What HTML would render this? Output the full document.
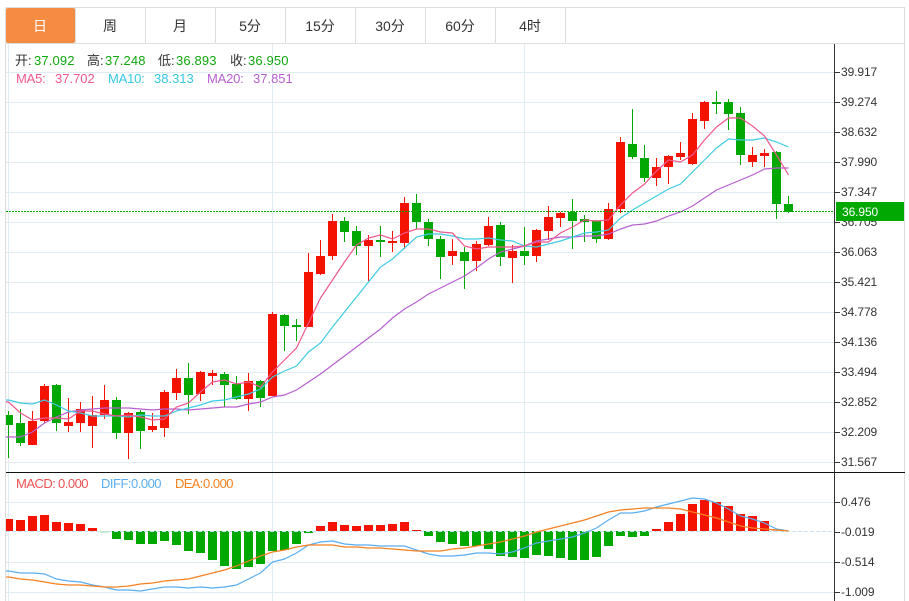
<!DOCTYPE html>
<html><head><meta charset="utf-8"><style>
html,body{margin:0;padding:0;background:#fff;width:909px;height:601px;overflow:hidden}
svg{display:block;font-family:"Liberation Sans","Noto Sans CJK SC",sans-serif}
</style></head><body>
<svg width="909" height="601" viewBox="0 0 909 601" xmlns="http://www.w3.org/2000/svg">
<defs><clipPath id="c"><rect x="6" y="44" width="828" height="557"/></clipPath></defs>
<rect width="909" height="601" fill="#fff"/>
<!-- tabs -->
<path d="M5.5 7.5H904.5V601M5.5 7.5V601M5 43.5H905M75.5 8V43M145.5 8V43M215.5 8V43M285.5 8V43M355.5 8V43M425.5 8V43M495.5 8V43M565.5 8V43" fill="none" stroke="#dedede" stroke-width="1"/>
<rect x="6" y="8" width="69" height="35" rx="2" fill="#f48c43"/>
<g font-size="14" fill="#333" text-anchor="middle">
<text x="40" y="31" fill="#fff">日</text><text x="110" y="31">周</text><text x="180" y="31">月</text><text x="250" y="31">5分</text><text x="320" y="31">15分</text><text x="390" y="31">30分</text><text x="460" y="31">60分</text><text x="530" y="31">4时</text>
</g>
<!-- grid -->
<path d="M6 72.5H834M6 102.5H834M6 132.5H834M6 162.5H834M6 192.5H834M6 222.5H834M6 252.5H834M6 282.5H834M6 312.5H834M6 342.5H834M6 372.5H834M6 402.5H834M6 432.5H834M6 462.5H834M6 502.5H834M6 562.5H834M6 592.5H834M8.5 44V472M272.5 44V472M524.5 44V472M8.5 473V601M272.5 473V601M524.5 473V601" fill="none" stroke="#e1ebf2" stroke-width="1"/>
<g clip-path="url(#c)" fill="none">
<!-- candles -->
<path stroke="#f31300" stroke-width="1" d="M32.5 411V445M44.5 384V423M68.5 398V432M80.5 402V432M92.5 396V448M104.5 385V419M128.5 412V459M152.5 413V432M164.5 390V437M176.5 369V400M200.5 371V401M212.5 370V385M248.5 373V411M272.5 312V396M308.5 253V327M320.5 240V275M332.5 214V260M368.5 235V281M392.5 231V252M404.5 197V249M452.5 239V265M476.5 241V271M488.5 217V246M512.5 245V283M536.5 229V262M548.5 206V240M560.5 212V227M608.5 203V240M620.5 137V213M656.5 158V186M668.5 155V184M680.5 142V160M692.5 113V165M704.5 101V129M752.5 147V167M764.5 149V167"/>
<path stroke="#f31300" stroke-width="9" d="M32.5 421V445M44.5 386V421M68.5 422V426M80.5 409V423M92.5 415V426M104.5 400V415M128.5 413V433M152.5 426V430M164.5 392V428M176.5 378V393M200.5 372V394M212.5 373V376M248.5 381V399M272.5 314V396M308.5 272V327M320.5 256V274M332.5 221V256M368.5 240V246M392.5 241V243M404.5 203V243M452.5 251V256M476.5 244V261M488.5 226V245M512.5 251V258M536.5 230V256M548.5 217V231M560.5 213V218M608.5 209V239M620.5 142V209M656.5 167V178M668.5 156V167M680.5 153V157M692.5 119V164M704.5 102V121M752.5 155V162M764.5 153V156"/>
<path stroke="#02a802" stroke-width="1" d="M8.5 411V458M20.5 409V446M56.5 384V431M116.5 397V439M140.5 410V449M188.5 363V414M224.5 372V407M236.5 376V400M260.5 380V407M284.5 314V351M296.5 319V341M344.5 217V242M356.5 226V255M380.5 226V257M416.5 194V229M428.5 219V246M440.5 236V279M464.5 247V289M500.5 222V266M524.5 227V265M572.5 199V249M584.5 215V242M596.5 220V243M632.5 109V159M644.5 145V182M716.5 91V114M728.5 99V130M740.5 107V165M776.5 151V219M788.5 196V213"/>
<path stroke="#02a802" stroke-width="9" d="M8.5 415V425M20.5 423V443M56.5 385V423M116.5 400V433M140.5 412V431M188.5 378V395M224.5 374V385M236.5 384V399M260.5 381V398M284.5 315V326M296.5 325V327M344.5 221V232M356.5 231V246M380.5 240V242M416.5 203V222M428.5 222V239M440.5 239V257M464.5 252V261M500.5 225V257M524.5 251V256M572.5 212V221M584.5 219V222M596.5 221V239M632.5 144V157M644.5 158V178M716.5 102V104M728.5 102V114M740.5 113V155M776.5 152V204M788.5 204V212"/>
<!-- MA lines -->
<polyline stroke="#b75fd0" stroke-width="1.2" points="6,437 8.5,437 20.5,437 32.5,432 44.5,423 56.5,417 68.5,412 80.5,410 92.5,409 104.5,408 116.5,408 128.5,408 140.5,409 152.5,410 164.5,409 176.5,409 188.5,410 200.5,409 212.5,408 224.5,407 236.5,407 248.5,404 260.5,402 272.5,397 284.5,395 296.5,390 308.5,382 320.5,374 332.5,365 344.5,356 356.5,347 368.5,338 380.5,329 392.5,318 404.5,309 416.5,302 428.5,294 440.5,288 452.5,282 464.5,276 476.5,268 488.5,259 500.5,252 512.5,249 524.5,246 536.5,241 548.5,239 560.5,237 572.5,237 584.5,236 596.5,236 608.5,234 620.5,229 632.5,225 644.5,224 656.5,221 668.5,216 680.5,212 692.5,206 704.5,198 716.5,190 728.5,185 740.5,180 752.5,175 764.5,169 776.5,168 788.5,168"/>
<polyline stroke="#40cbe3" stroke-width="1.2" points="6,400 8.5,400 20.5,403 32.5,404 44.5,400 56.5,405 68.5,411 80.5,413 92.5,416 104.5,416 116.5,416 128.5,417 140.5,415 152.5,416 164.5,416 176.5,411 188.5,408 200.5,405 212.5,401 224.5,400 236.5,397 248.5,394 260.5,389 272.5,377 284.5,371 296.5,366 308.5,352 320.5,343 332.5,327 344.5,312 356.5,297 368.5,282 380.5,267 392.5,259 404.5,248 416.5,237 428.5,234 440.5,234 452.5,236 464.5,239 476.5,239 488.5,238 500.5,240 512.5,241 524.5,246 536.5,247 548.5,244 560.5,241 572.5,237 584.5,233 596.5,232 608.5,230 620.5,218 632.5,210 644.5,203 656.5,196 668.5,189 680.5,184 692.5,172 704.5,160 716.5,148 728.5,139 740.5,140 752.5,140 764.5,138 776.5,142 788.5,147"/>
<polyline stroke="#f0568f" stroke-width="1.2" points="6,402 8.5,402 20.5,413 32.5,420 44.5,418 56.5,418 68.5,419 80.5,411 92.5,411 104.5,414 116.5,416 128.5,415 140.5,417 152.5,420 164.5,419 176.5,407 188.5,403 200.5,392 212.5,382 224.5,380 236.5,384 248.5,382 260.5,387 272.5,372 284.5,360 296.5,348 308.5,323 320.5,298 332.5,280 344.5,262 356.5,245 368.5,238 380.5,235 392.5,239 404.5,233 416.5,229 428.5,229 440.5,232 452.5,233 464.5,246 476.5,249 488.5,247 500.5,247 512.5,247 524.5,246 536.5,242 548.5,242 560.5,233 572.5,227 584.5,220 596.5,221 608.5,220 620.5,205 632.5,193 644.5,184 656.5,171 668.5,160 680.5,162 692.5,155 704.5,140 716.5,127 728.5,118 740.5,118 752.5,126 764.5,136 776.5,155 788.5,175"/>
<!-- close dotted -->
<path stroke="#00a800" stroke-width="1" stroke-dasharray="2 1" d="M6 211.5H834"/>
<!-- MACD bars -->
<path stroke="#f31300" stroke-width="9" d="M8.5 519V531M20.5 520V531M32.5 516V531M44.5 515V531M56.5 522V531M68.5 523V531M80.5 524V531M92.5 528V531M320.5 526V531M332.5 522V531M344.5 525V531M356.5 526V531M368.5 525V531M380.5 525V531M392.5 524V531M404.5 522V531M416.5 530V531M656.5 529V531M668.5 522V531M680.5 514V531M692.5 504V531M704.5 500V531M716.5 502V531M728.5 506V531M740.5 514V531M752.5 516V531M764.5 521V531"/>
<path stroke="#f9b0a8" stroke-width="9" d="M776.5 529.5V531"/>
<path stroke="#02a802" stroke-width="9" d="M116.5 531V539M128.5 531V540M140.5 531V544M152.5 531V544M164.5 531V541M176.5 531V545M188.5 531V551M200.5 531V553M212.5 531V560M224.5 531V566M236.5 531V569M248.5 531V567M260.5 531V564M272.5 531V551M284.5 531V550M296.5 531V544M308.5 531V533M428.5 531V536M440.5 531V542M452.5 531V544M464.5 531V546M476.5 531V546M488.5 531V549M500.5 531V556M512.5 531V557M524.5 531V558M536.5 531V555M548.5 531V556M560.5 531V558M572.5 531V560M584.5 531V560M596.5 531V557M608.5 531V546M620.5 531V536M632.5 531V537M644.5 531V536"/>
<path stroke="#8fd88f" stroke-width="9" d="M104.5 531.5V532.5"/>
<!-- MACD zero -->
<path stroke="#c4e3f2" stroke-width="1" stroke-dasharray="4 2" d="M6 531.5H834"/>
<polyline stroke="#5aaef0" stroke-width="1.2" points="6,571 8.5,571 20.5,573 32.5,573 44.5,574 56.5,579 68.5,581 80.5,582 92.5,585 104.5,587 116.5,590 128.5,590 140.5,591 152.5,589 164.5,587 176.5,587 188.5,588 200.5,587 212.5,588 224.5,587 236.5,585 248.5,579 260.5,573 272.5,562 284.5,559 296.5,553 308.5,545 320.5,542 332.5,541 344.5,544 356.5,545 368.5,545 380.5,546 392.5,546 404.5,546 416.5,550 428.5,554 440.5,556 452.5,556 464.5,555 476.5,553 488.5,553 500.5,554 512.5,552 524.5,548 536.5,543 548.5,541 560.5,539 572.5,537 584.5,533 596.5,528 608.5,520 620.5,513 632.5,513 644.5,511 656.5,507 668.5,504 680.5,501 692.5,498 704.5,499 716.5,503 728.5,509 740.5,516 752.5,519 764.5,523 776.5,529 788.5,531"/>
<polyline stroke="#f58020" stroke-width="1.2" points="6,577 8.5,577 20.5,579 32.5,580 44.5,582 56.5,584 68.5,585 80.5,585 92.5,586 104.5,587 116.5,587 128.5,586 140.5,584 152.5,583 164.5,581 176.5,580 188.5,579 200.5,576 212.5,573 224.5,570 236.5,566 248.5,561 260.5,556 272.5,552 284.5,550 296.5,547 308.5,545 320.5,545 332.5,545 344.5,547 356.5,547 368.5,548 380.5,548 392.5,549 404.5,550 416.5,551 428.5,551 440.5,551 452.5,549 464.5,548 476.5,546 488.5,544 500.5,542 512.5,539 524.5,536 536.5,532 548.5,529 560.5,526 572.5,523 584.5,520 596.5,516 608.5,512 620.5,510 632.5,509 644.5,508 656.5,508 668.5,508 680.5,509 692.5,512 704.5,515 716.5,518 728.5,522 740.5,526 752.5,528 764.5,529 776.5,530 788.5,531"/>
</g>
<!-- divider and axis -->
<path d="M6 472.5H905" stroke="#111" stroke-width="1" fill="none"/>
<path d="M834.5 44V601" stroke="#333" stroke-width="1" fill="none"/>
<path d="M835 72.5H840M835 102.5H840M835 132.5H840M835 162.5H840M835 192.5H840M835 222.5H840M835 252.5H840M835 282.5H840M835 312.5H840M835 342.5H840M835 372.5H840M835 402.5H840M835 432.5H840M835 462.5H840M835 502.5H840M835 532.5H840M835 562.5H840M835 592.5H840" stroke="#333" stroke-width="1" fill="none"/>
<g font-size="12" fill="#333" letter-spacing="-.1">
<text x="841" y="76">39.917</text><text x="841" y="106">39.274</text><text x="841" y="136">38.632</text><text x="841" y="166">37.990</text><text x="841" y="196">37.347</text><text x="841" y="226">36.705</text><text x="841" y="256">36.063</text><text x="841" y="286">35.421</text><text x="841" y="316">34.778</text><text x="841" y="346">34.136</text><text x="841" y="376">33.494</text><text x="841" y="406">32.852</text><text x="841" y="436">32.209</text><text x="841" y="466">31.567</text>
<text x="841" y="506">0.476</text><text x="841" y="536">-0.019</text><text x="841" y="566">-0.514</text><text x="841" y="596">-1.009</text>
</g>
<rect x="836" y="202" width="68" height="19" fill="#02a802"/>
<text x="842" y="216" font-size="12" fill="#fff" letter-spacing="-.1">36.950</text>
<!-- header legends -->
<g font-size="13">
<text x="15" y="65" fill="#333">开:</text><text x="34" y="65" fill="#0fa80f" letter-spacing=".15">37.092</text>
<text x="87" y="65" fill="#333">高:</text><text x="105" y="65" fill="#0fa80f" letter-spacing=".15">37.248</text>
<text x="158" y="65" fill="#333">低:</text><text x="176" y="65" fill="#0fa80f" letter-spacing=".15">36.893</text>
<text x="230" y="65" fill="#333">收:</text><text x="248" y="65" fill="#0fa80f" letter-spacing=".15">36.950</text>
<text x="16" y="83" fill="#f0568f" letter-spacing="-.2">MA5:</text><text x="55" y="83" fill="#f0568f">37.702</text>
<text x="108" y="83" fill="#35c8e0" letter-spacing="-.2">MA10:</text><text x="154" y="83" fill="#35c8e0">38.313</text>
<text x="207" y="83" fill="#b75fd0" letter-spacing="-.2">MA20:</text><text x="253" y="83" fill="#b75fd0">37.851</text>
<text x="16" y="488" fill="#f05050" letter-spacing="-.5">MACD:</text><text x="58" y="488" fill="#f05050" letter-spacing="-.5">0.000</text>
<text x="101" y="488" fill="#5aaef0" letter-spacing="-.5">DIFF:</text><text x="131" y="488" fill="#5aaef0" letter-spacing="-.5">0.000</text>
<text x="175" y="488" fill="#f58020" letter-spacing="-.7">DEA:</text><text x="203" y="488" fill="#f58020" letter-spacing="-.5">0.000</text>
</g>
</svg>
</body></html>
